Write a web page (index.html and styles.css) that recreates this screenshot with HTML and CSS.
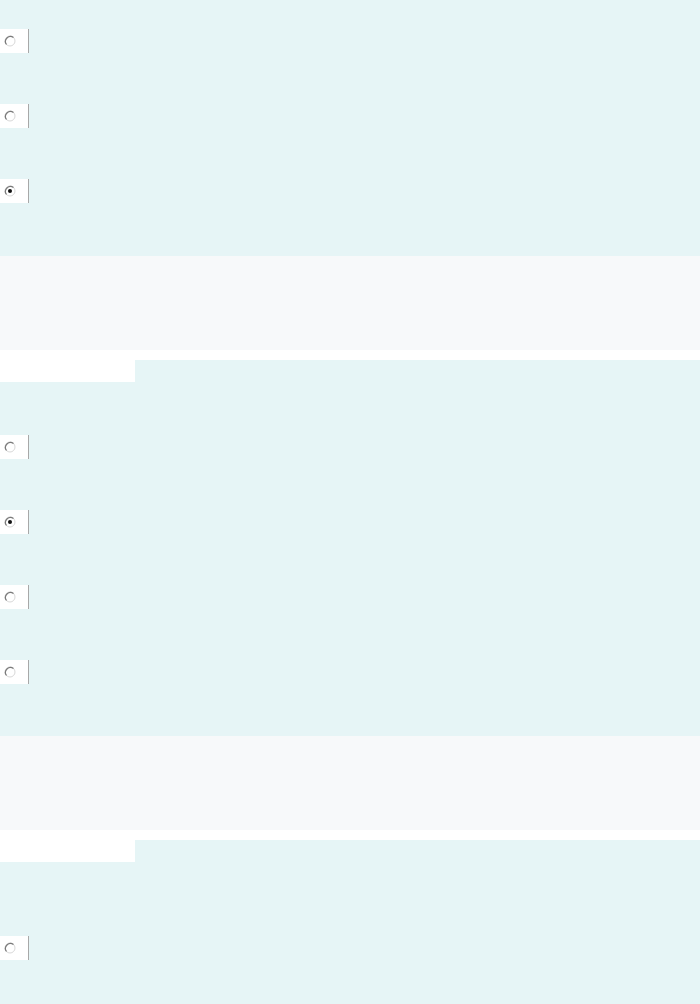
FILE: index.html
```html
<!DOCTYPE html>
<html lang="en">
<head>
  <meta charset="UTF-8">
  <meta name="viewport" content="width=device-width, initial-scale=1.0">
  <title>Opciones</title>
  <link rel="stylesheet" href="styles.css">
</head>
<body>
  <!-- Grupo 1 -->
  <div class="options first">
    <label class="radio"><svg viewBox="0 0 12 12"><circle cx="6" cy="6" r="5" class="ring"/><path d="M2.5 9.5 A5 5 0 0 1 9.5 2.5" class="arc"/></svg></label>
    <label class="radio"><svg viewBox="0 0 12 12"><circle cx="6" cy="6" r="5" class="ring"/><path d="M2.5 9.5 A5 5 0 0 1 9.5 2.5" class="arc"/></svg></label>
    <label class="radio"><svg viewBox="0 0 12 12"><circle cx="6" cy="6" r="5" class="ring"/><path d="M2.5 9.5 A5 5 0 0 1 9.5 2.5" class="arc"/><circle cx="6" cy="6" r="2" class="dot"/></svg></label>
  </div>

  <div class="divider"></div>
  <div class="strip"></div>
  <div class="tab-row"><div class="tab"></div></div>

  <!-- Grupo 2 -->
  <div class="options second">
    <label class="radio"><svg viewBox="0 0 12 12"><circle cx="6" cy="6" r="5" class="ring"/><path d="M2.5 9.5 A5 5 0 0 1 9.5 2.5" class="arc"/></svg></label>
    <label class="radio"><svg viewBox="0 0 12 12"><circle cx="6" cy="6" r="5" class="ring"/><path d="M2.5 9.5 A5 5 0 0 1 9.5 2.5" class="arc"/><circle cx="6" cy="6" r="2" class="dot"/></svg></label>
    <label class="radio"><svg viewBox="0 0 12 12"><circle cx="6" cy="6" r="5" class="ring"/><path d="M2.5 9.5 A5 5 0 0 1 9.5 2.5" class="arc"/></svg></label>
    <label class="radio"><svg viewBox="0 0 12 12"><circle cx="6" cy="6" r="5" class="ring"/><path d="M2.5 9.5 A5 5 0 0 1 9.5 2.5" class="arc"/></svg></label>
  </div>

  <div class="divider"></div>
  <div class="strip"></div>
  <div class="tab-row"><div class="tab"></div></div>

  <!-- Grupo 3 -->
  <div class="options third">
    <label class="radio"><svg viewBox="0 0 12 12"><circle cx="6" cy="6" r="5" class="ring"/><path d="M2.5 9.5 A5 5 0 0 1 9.5 2.5" class="arc"/></svg></label>
  </div>
</body>
</html>
```

FILE: styles.css
```css
body {
  margin: 0;
  padding: 0;
  background-color: #e6f5f6;
  font-family: Arial, "Liberation Sans", sans-serif;
}

.options {
  display: flex;
  flex-direction: column;
  gap: 51px;
  background-color: #e6f5f6;
}

.options.first {
  padding: 29px 0 53px;
}

.options.second {
  padding: 53px 0 52px;
}

.options.third {
  padding: 74px 0 43px;
}

.radio {
  display: block;
  width: 28px;
  height: 24px;
  background-color: #fff;
  border-right: 1px solid #a8a8a8;
  position: relative;
}

.radio svg {
  position: absolute;
  left: 4px;
  top: 6px;
  width: 12px;
  height: 12px;
}

.ring {
  fill: #fff;
  stroke: #d8d8d8;
  stroke-width: 1;
}

.arc {
  fill: none;
  stroke: #7a7a7a;
  stroke-width: 1.2;
}

.dot {
  fill: #111;
}

.divider {
  height: 94px;
  background-color: #f7f9fa;
}

.strip {
  height: 10px;
  background-color: #fff;
}

.tab-row {
  height: 22px;
}

.tab {
  width: 135px;
  height: 22px;
  background-color: #fff;
}
```
